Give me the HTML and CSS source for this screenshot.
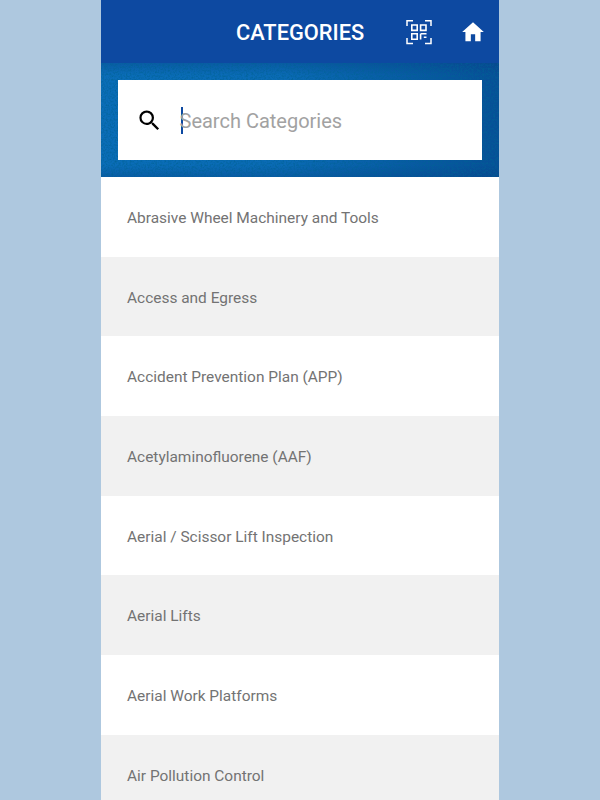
FILE: index.html
```html
<!DOCTYPE html>
<html lang="en">
<head>
<meta charset="utf-8">
<title>Categories</title>
<link rel="stylesheet" href="styles.css">
</head>
<body>
<div class="app">
  <header class="topbar">
    <h1 class="title">CATEGORIES</h1>
    <svg class="scan" viewBox="0 0 26 26" width="26" height="26" fill="none" stroke="#fff">
      <path stroke-width="1.5" d="M1 7V1.7H7M19 1.7H25V7M1 19V24.6H7M19 24.6H25V19"/>
      <path stroke-width="1.6" d="M5.8 6H11.2V11.4H5.8ZM14.6 6H20V11.4H14.6ZM5.8 14.8H11.2V20.2H5.8ZM14.6 14.8H20.5M14.6 14.8V20.5M17.8 18.2H20.5"/>
    </svg>
    <svg class="home" viewBox="0 0 24 24" width="26" height="26" fill="#fff"><path d="M10 20.5v-6.5h4v6.5h5v-8.5h3L12 3 2 12h3v8.5z"/></svg>
  </header>
  <div class="search-band">
    <svg class="texture" width="398" height="114" aria-hidden="true">
      <filter id="grain" x="0" y="0" width="100%" height="100%">
        <feTurbulence type="fractalNoise" baseFrequency="0.55" numOctaves="3" seed="7"/>
        <feColorMatrix type="matrix" values="0 0 0 0 0  0 0 0 0 0.12  0 0 0 0 0.3  0 0 0 1.6 -0.62"/>
      </filter>
      <rect width="398" height="114" filter="url(#grain)"/>
    </svg>
    <div class="search-box">
      <svg class="mag" viewBox="0 0 24 24" width="27" height="27" fill="#000"><path d="M15.5 14h-.79l-.28-.27A6.47 6.47 0 0 0 16 9.5 6.5 6.5 0 1 0 9.5 16c1.61 0 3.09-.59 4.23-1.57l.27.28v.79l5 4.99L20.49 19l-4.99-5zm-6 0C7.01 14 5 11.99 5 9.5S7.01 5 9.5 5 14 7.01 14 9.5 11.99 14 9.5 14z"/></svg>
      <span class="caret"></span>
      <span class="placeholder">Search Categories</span>
    </div>
  </div>
  <ul class="list">
    <li class="row">Abrasive Wheel Machinery and Tools</li>
    <li class="row">Access and Egress</li>
    <li class="row">Accident Prevention Plan (APP)</li>
    <li class="row">Acetylaminofluorene (AAF)</li>
    <li class="row">Aerial / Scissor Lift Inspection</li>
    <li class="row">Aerial Lifts</li>
    <li class="row">Aerial Work Platforms</li>
    <li class="row">Air Pollution Control</li>
  </ul>
</div>
</body>
</html>
```
FILE: styles.css
```css
html, body {
  margin: 0;
  height: 100%;
  overflow: hidden;
  background: #aec8df;
}
.app {
  width: 398px;
  height: 800px;
  margin: 0 auto;
  background: #fff;
  overflow: hidden;
  font-family: Roboto, sans-serif;
}
.topbar {
  height: 63px;
  box-sizing: border-box;
  background: #0d49a1;
  display: flex;
  align-items: center;
  position: relative;
}
.title {
  position: absolute;
  left: 135px;
  top: 0;
  margin: 0;
  line-height: 65px;
  font-size: 21.8px;
  font-weight: 500;
  color: #fff;
}
.scan { margin-left: 305px; }
.home { margin-left: 28px; }
.search-band {
  position: relative;
  height: 114px;
  box-sizing: border-box;
  padding: 17px 17px;
  background:
    linear-gradient(180deg, rgba(8,60,130,.35) 0, rgba(8,60,130,0) 12px, rgba(8,60,130,0) 102px, rgba(8,60,130,.35) 100%),
    linear-gradient(90deg, #0a6db8 0%, #0a6bb5 45%, #064f96 100%);
}
.texture {
  position: absolute;
  left: 0;
  top: 0;
}
.search-box {
  position: relative;
  height: 80px;
  background: #fff;
  display: flex;
  align-items: center;
  padding-left: 17.5px;
}
.caret {
  width: 2px;
  height: 27px;
  margin-left: 18px;
  background: #0d49a1;
  flex: none;
}
.placeholder {
  margin-left: -3px;
  padding-top: 2px;
  font-size: 20px;
  color: #a2a2a2;
}
.list {
  list-style: none;
  margin: 0;
  padding: 0;
}
.row {
  height: 79.7px;
  box-sizing: border-box;
  padding: 31px 0 0 26px;
  font-size: 15.45px;
  line-height: 20px;
  color: #737373;
}
.row:nth-child(even) { background: #f1f1f1; }
```
